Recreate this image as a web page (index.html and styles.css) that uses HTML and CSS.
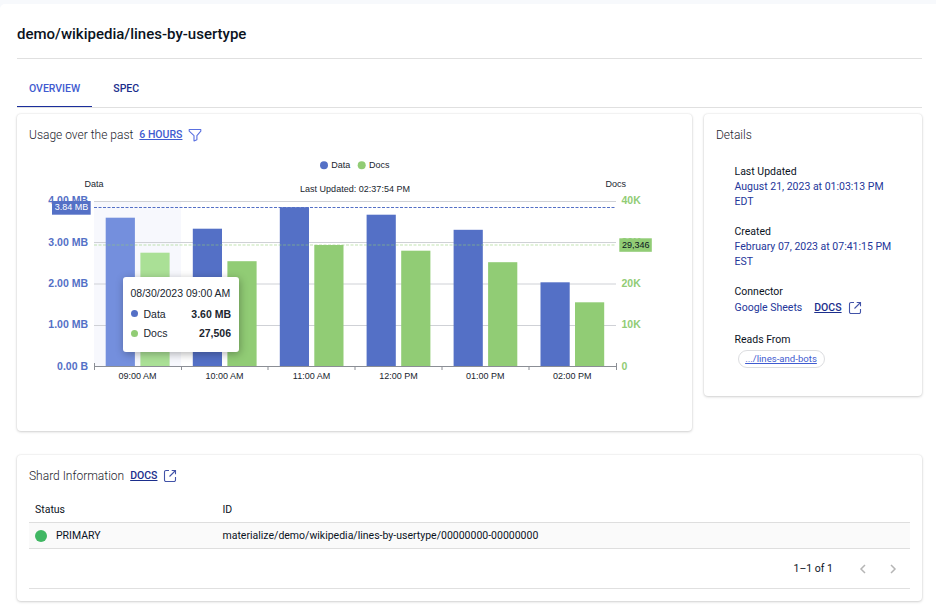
FILE: index.html
```html
<!DOCTYPE html>
<html lang="en">
<head>
<meta charset="utf-8">
<title>demo/wikipedia/lines-by-usertype</title>
<link rel="stylesheet" href="styles.css">
</head>
<body>
<main class="page">
  <h1 class="title">demo/wikipedia/lines-by-usertype</h1>
  <nav class="tabs">
    <a class="tab active">OVERVIEW</a>
    <a class="tab">SPEC</a>
  </nav>
  <div class="columns">
    <section class="card usage">
      <header class="card-head">
        <h2>Usage over the past</h2>
        <a class="link hours">6 HOURS</a>
        <svg class="icon-filter" width="14" height="14" viewBox="0 0 14 14"><path d="M1.200 1.500h11.600v1.700L8.900 7.600v4.100l-2.900 1.200V7.600L1.200 3.200z" fill="none" stroke="#5a70e0" stroke-width="1.100" stroke-linejoin="round"/></svg>
      </header>
      <div class="chart">
        <svg width="652" height="270" viewBox="29 150 652 270">
          <circle cx="324" cy="165.300" r="4" fill="#5470c6"/>
          <text x="331.300" y="168">Data</text>
          <circle cx="361.700" cy="165.300" r="4" fill="#91cc75"/>
          <text x="369" y="168">Docs</text>
          <text x="355" y="192" text-anchor="middle" textLength="110">Last Updated: 02:37:54 PM</text>
          <text x="94" y="187" text-anchor="middle">Data</text>
          <text x="615.700" y="187" text-anchor="middle">Docs</text>
          <rect x="94" y="202" width="87" height="164" fill="#f7f8fd"/>
          <path d="M94 201.500H616M94 242.500H616M94 284H616M94 325.500H616" stroke="#cfd1d6" stroke-width="1"/>
          <g fill="#5470c6">
            <rect x="105.700" y="217.700" width="29.200" height="148.500" fill="#748fdd"/>
            <rect x="192.800" y="228.700" width="29.200" height="137.500"/>
            <rect x="279.800" y="207.200" width="29.200" height="159"/>
            <rect x="366.600" y="214.700" width="29.200" height="151.500"/>
            <rect x="453.600" y="229.800" width="29.200" height="136.400"/>
            <rect x="540.500" y="282.300" width="29.200" height="83.900"/>
          </g>
          <g fill="#91cc75">
            <rect x="140.400" y="252.700" width="29.200" height="113.500" fill="#aae096"/>
            <rect x="227.400" y="261.200" width="29.200" height="105"/>
            <rect x="314.300" y="245" width="29.200" height="121.200"/>
            <rect x="401.200" y="250.700" width="29.200" height="115.500"/>
            <rect x="488.100" y="262.200" width="29.200" height="104"/>
            <rect x="575" y="302.300" width="29.200" height="63.900"/>
          </g>
          <path d="M94 366.500H616.500M94.500 363v7M181.500 367v3M268 367v3M355 367v3M442 367v3M529 367v3M616.500 363v7" stroke="#8b8e95" fill="none"/>
          <path d="M94 207.500H616" stroke="#5470c6" stroke-dasharray="3 1.500"/>
          <path d="M94 245H616" stroke="#91cc75" stroke-opacity=".55" stroke-dasharray="3 1.500"/>
          <g class="axis data" text-anchor="end">
            <text x="88" y="204.300">4.00 MB</text>
            <text x="88" y="245.500">3.00 MB</text>
            <text x="88" y="287">2.00 MB</text>
            <text x="88" y="328.300">1.00 MB</text>
            <text x="88" y="369.700">0.00 B</text>
          </g>
          <g class="axis docs">
            <text x="621.500" y="204.300">40K</text>
            <text x="621.500" y="245.500">30K</text>
            <text x="621.500" y="287">20K</text>
            <text x="621.500" y="328.300">10K</text>
            <text x="621.500" y="369.700">0</text>
          </g>
          <rect x="52" y="201" width="38.700" height="13.700" fill="#5470c6"/>
          <text x="71.500" y="210" text-anchor="middle" class="on-blue">3.84 MB</text>
          <rect x="619.300" y="238.300" width="32.500" height="13.500" fill="#91cc75"/>
          <text x="635.700" y="248" text-anchor="middle" class="on-green">29,346</text>
          <g text-anchor="middle">
            <text x="137.600" y="379">09:00 AM</text>
            <text x="224.600" y="379">10:00 AM</text>
            <text x="311.500" y="379">11:00 AM</text>
            <text x="398.400" y="379">12:00 PM</text>
            <text x="485.300" y="379">01:00 PM</text>
            <text x="572.200" y="379">02:00 PM</text>
          </g>
        </svg>
        <div class="tooltip">
          <div class="tip-title">08/30/2023 09:00 AM</div>
          <div class="tip-row"><i class="dot blue"></i><span>Data</span><b>3.60 MB</b></div>
          <div class="tip-row"><i class="dot green"></i><span>Docs</span><b>27,506</b></div>
        </div>
      </div>
    </section>
    <section class="card details">
      <header class="card-head"><h2>Details</h2></header>
      <dl>
        <div class="item"><dt>Last Updated</dt><dd>August 21, 2023 at 01:03:13 PM EDT</dd></div>
        <div class="item"><dt>Created</dt><dd>February 07, 2023 at 07:41:15 PM EST</dd></div>
        <div class="item"><dt>Connector</dt>
          <dd class="connector"><span>Google Sheets</span><a class="link">DOCS</a>
            <svg width="14" height="14" viewBox="0 0 14 14"><path d="M6 1.500H3A1.500 1.500 0 0 0 1.500 3v8A1.500 1.500 0 0 0 3 12.500h8a1.500 1.500 0 0 0 1.500-1.500V8M8.700 1.500h3.800v3.800M12.500 1.500L6.500 7.500" class="ext"/></svg></dd></div>
        <div class="item"><dt>Reads From</dt><dd><a class="chip">.../lines-and-bots</a></dd></div>
      </dl>
    </section>
  </div>
  <section class="card shards">
    <header class="card-head">
      <h2>Shard Information</h2>
      <a class="link">DOCS</a>
      <svg width="14" height="14" viewBox="0 0 14 14"><path d="M6 1.500H3A1.500 1.500 0 0 0 1.500 3v8A1.500 1.500 0 0 0 3 12.500h8a1.500 1.500 0 0 0 1.500-1.500V8M8.700 1.500h3.800v3.800M12.500 1.500L6.500 7.500" class="ext"/></svg>
    </header>
    <div class="table">
      <div class="row head"><span>Status</span><span>ID</span></div>
      <div class="row body"><span class="status"><i></i>PRIMARY</span><span>materialize/demo/wikipedia/lines-by-usertype/00000000-00000000</span></div>
      <div class="pager">
        <span>1–1 of 1</span>
        <svg width="10" height="10" viewBox="0 0 10 10"><path d="M7 1L3 5l4 4"/></svg>
        <svg width="10" height="10" viewBox="0 0 10 10"><path d="M3 1l4 4-4 4"/></svg>
      </div>
    </div>
  </section>
</main>
</body>
</html>
```
FILE: styles.css
```css
* { box-sizing: border-box; }
body {
  margin: 0;
  padding-top: 4px;
  height: 614px;
  overflow: hidden;
  background: #f7f9fc;
  font-family: Roboto, "Liberation Sans", sans-serif;
  font-size: 10.5px;
  color: #0b131e;
}
.page {
  height: 610px;
  padding: 0 14px 0 17px;
  background: #fff;
  border-top-left-radius: 5px;
}
.title {
  margin: 0;
  height: 55px;
  padding-top: 20px;
  border-bottom: 1px solid #e0e0e0;
  font-size: 15px;
  line-height: 20px;
  font-weight: 500;
}
.tabs {
  display: flex;
  height: 49px;
  padding-top: 12px;
  border-bottom: 1px solid #e0e0e0;
}
.tab {
  height: 37px;
  padding: 0 12px;
  line-height: 35px;
  font-weight: 500;
  color: #1b2e8c;
}
.tab.active {
  height: 36px;
  color: #3f5bd0;
  border-bottom: 1px solid #1b2e9c;
}
.tab + .tab { padding-left: 21px; }
.columns {
  display: grid;
  grid-template-columns: 675px 218px;
  justify-content: space-between;
  align-items: start;
  margin-top: 6px;
}
.card {
  padding: 12px;
  border-radius: 4px;
  background: #fff;
  box-shadow: 0 1px 3px rgba(0, 0, 0, .16), 0 0 2px rgba(0, 0, 0, .12);
}
.usage { height: 317px; }
.details { height: 282px; }
.card-head {
  display: flex;
  align-items: center;
  gap: 6px;
  height: 18px;
}
h2 {
  margin: 0;
  font-size: 12px;
  font-weight: 300;
  color: #1c232d;
}
.link {
  height: 12px;
  font-weight: 500;
  line-height: 12px;
  color: #1b2e8c;
  text-decoration: underline;
  text-decoration-thickness: 1px;
  text-underline-offset: 1px;
}
.hours { color: #3f5bd0; }
.ext { fill: none; stroke: #4253a8; stroke-width: 1.100; }
.chart {
  position: relative;
  margin-top: 6px;
}
.chart > svg { display: block; }
.chart text {
  font-family: "Liberation Sans", sans-serif;
  font-size: 9px;
  fill: #20262f;
}
.chart .axis text { font-size: 10.500px; font-weight: 700; }
.chart .data text { fill: #5470c6; }
.chart .docs text { fill: #91cc75; }
.chart .on-blue { fill: #fff; }
.chart .on-green { fill: #0b131e; }
.tooltip {
  position: absolute;
  left: 93.500px;
  top: 127px;
  width: 116.500px;
  height: 75px;
  padding: 6px 8px 0 8px;
  border-radius: 3px;
  background: #fff;
  box-shadow: 1px 2px 8px rgba(0, 0, 0, .3);
  font-family: "Liberation Sans", sans-serif;
  font-size: 10.500px;
  line-height: 20px;
  color: #20262f;
}
.tip-title { line-height: 20px; white-space: nowrap; }
.tip-row { display: flex; align-items: center; height: 19.500px; }
.tip-row b { margin-left: auto; }
.tip-title + .tip-row { margin-top: 1px; }
.dot { width: 7px; height: 7px; margin-right: 6px; border-radius: 50%; }
.blue { background: #5470c6; }
.green { background: #91cc75; }
dl { margin: 20px 18px 0 18.500px; line-height: 15px; }
.item { margin-bottom: 15px; }
dd { margin: 0; color: #24369a; }
.connector { display: flex; align-items: center; height: 17px; margin-bottom: 16px; }
.connector .link { margin: 0 6px 0 12px; }
.chip {
  display: block;
  width: 87px;
  height: 18px;
  margin: 3px 0 0 3px;
  border: 1px solid #dcdde0;
  border-radius: 9px;
  font-size: 9.600px;
  line-height: 16px;
  text-align: center;
  text-decoration: underline;
  color: #3f5bd0;
}
.shards { height: 146px; margin-top: 24px; }
.table { margin-top: 12px; }
.row {
  display: grid;
  grid-template-columns: 187.500px 1fr;
  align-items: center;
  height: 26px;
  padding-left: 6px;
  border-bottom: 1px solid #dedede;
}
.row.body { background: #fafafa; }
.status { display: flex; align-items: center; }
.status i {
  width: 12px;
  height: 12px;
  margin-right: 9px;
  border-radius: 50%;
  background: #40b763;
}
.pager {
  display: flex;
  align-items: center;
  justify-content: flex-end;
  height: 40px;
  padding-right: 12px;
  border-bottom: 1px solid #e0e0e0;
}
.pager svg { margin-left: 20px; fill: none; stroke: #b5b5b5; stroke-width: 1.500; }
.pager span { margin-right: 5px; }
```
